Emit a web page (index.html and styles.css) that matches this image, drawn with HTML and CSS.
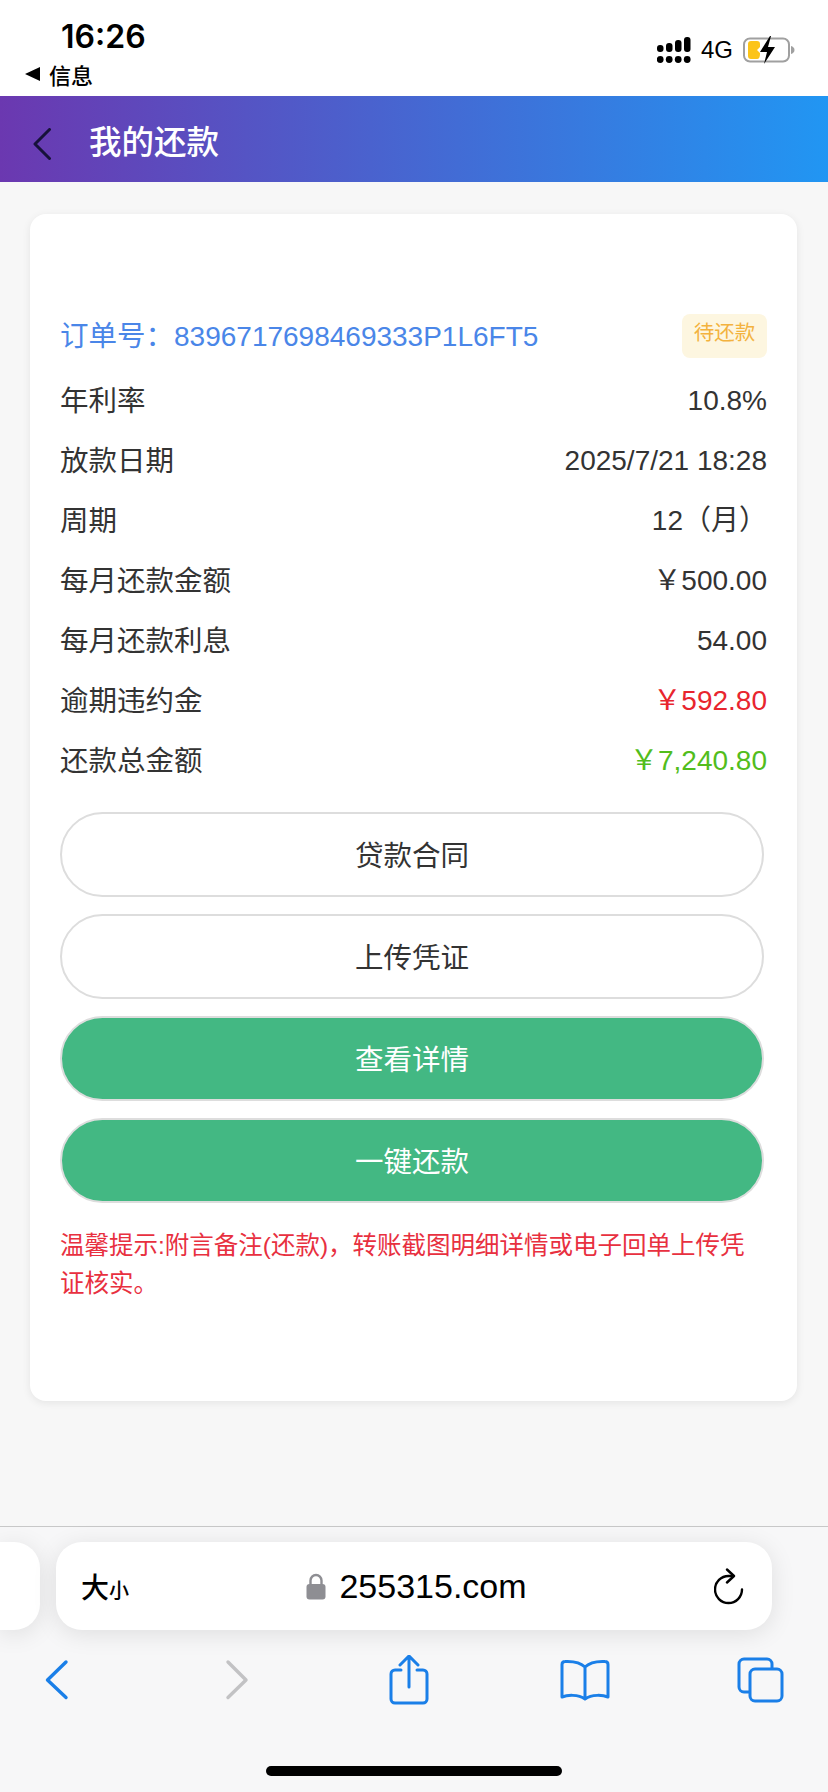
FILE: index.html
```html
<!DOCTYPE html>
<html lang="zh-CN">
<head>
    <meta charset="UTF-8">
    <meta name="viewport" content="width=device-width, initial-scale=1.0">
    <title>我的还款</title>
    <link rel="stylesheet" href="styles.css">
</head>
<body>
    <div class="status-bar">
        <div class="status-left">
            <div class="time">16:26</div>
            <div class="back-app"><span class="back-arrow"></span>信息</div>
        </div>
        <div class="status-right">
            <svg class="signal" width="34" height="26" viewBox="0 0 34 26">
                <rect x="0" y="8" width="6.500" height="7" rx="3"/>
                <rect x="9" y="6" width="6.500" height="9" rx="3"/>
                <rect x="18" y="3" width="6.500" height="12" rx="3"/>
                <rect x="27" y="0" width="6.500" height="15" rx="3"/>
                <circle cx="3.200" cy="22.500" r="3.400"/>
                <circle cx="12.200" cy="22.500" r="3.400"/>
                <circle cx="21.200" cy="22.500" r="3.400"/>
                <circle cx="30.200" cy="22.500" r="3.400"/>
            </svg>
            <span class="network">4G</span>
            <svg class="battery" width="52" height="28" viewBox="0 0 52 28">
                <rect x="1" y="2.500" width="45" height="23" rx="6" fill="none" stroke="#a0a0a0" stroke-width="2"/>
                <path d="M48 10c2 .5 3.500 2 3.500 4s-1.500 3.500-3.500 4z" fill="#a0a0a0"/>
                <path d="M8 5h6c2 0 3 1 3 3v3l-3 3 3 3v1c0 3-1 5-3 5H8c-2 0-3-1-3-3V8c0-2 1-3 3-3z" fill="#fcc419"/>
                <path d="M27 0 17 16h7l-3 12 11-17h-7l3-11z" fill="#000"/>
            </svg>
        </div>
    </div>

    <div class="page-header">
        <svg class="header-back" width="20" height="32" viewBox="0 0 20 32">
            <path d="M17.500 1.500 3 16l14.500 14.500" fill="none" stroke="#17123a" stroke-width="3" stroke-linecap="round" stroke-linejoin="round"/>
        </svg>
        <h1>我的还款</h1>
    </div>

    <div class="page-main">
        <div class="card">
            <div class="row order-row">
                <span class="order-no"><span class="label">订单号：</span>8396717698469333P1L6FT5</span>
                <span class="badge">待还款</span>
            </div>
            <div class="row"><span class="label">年利率</span><span>10.8%</span></div>
            <div class="row"><span class="label">放款日期</span><span>2025/7/21 18:28</span></div>
            <div class="row"><span class="label">周期</span><span>12（月）</span></div>
            <div class="row"><span class="label">每月还款金额</span><span>￥500.00</span></div>
            <div class="row"><span class="label">每月还款利息</span><span>54.00</span></div>
            <div class="row"><span class="label">逾期违约金</span><span class="red">￥592.80</span></div>
            <div class="row"><span class="label">还款总金额</span><span class="green">￥7,240.80</span></div>

            <div class="actions">
                <button class="btn">贷款合同</button>
                <button class="btn">上传凭证</button>
                <button class="btn btn-green">查看详情</button>
                <button class="btn btn-green">一键还款</button>
            </div>

            <p class="notice">温馨提示:附言备注(还款)，转账截图明细详情或电子回单上传凭证核实。</p>
        </div>
    </div>

    <div class="browser-bar">
        <div class="address-row">
            <div class="prev-tab"></div>
            <div class="address">
                <span class="text-size">大<small>小</small></span>
                <span class="url">
                    <svg width="20" height="27" viewBox="0 0 20 27">
                        <path d="M4.500 12V7.500a5.500 5.500 0 0 1 11 0V12" fill="none" stroke="#8e8e93" stroke-width="2.400"/>
                        <rect x="0.500" y="11" width="19" height="15.500" rx="3" fill="#8e8e93"/>
                    </svg>
                    255315.com
                </span>
                <svg class="reload" width="30" height="37" viewBox="0 0 30 37">
                    <path d="M28 21.500a13.500 13.500 0 1 1-13.500-13.500h3" fill="none" stroke="#000" stroke-width="2.400" stroke-linecap="round"/>
                    <path d="M13 1.500 20 8l-7 6.500" fill="none" stroke="#000" stroke-width="2.400" stroke-linecap="round" stroke-linejoin="round"/>
                </svg>
            </div>
        </div>
        <div class="toolbar">
            <svg width="50" height="50" viewBox="0 0 50 50">
                <path d="M34 7 15.500 25 34 42.500" fill="none" stroke="#1a7fe8" stroke-width="3.400" stroke-linecap="round" stroke-linejoin="round"/>
            </svg>
            <svg width="50" height="50" viewBox="0 0 50 50">
                <path d="M20 7 38 25 20 42.500" fill="none" stroke="#c2c2c4" stroke-width="3.400" stroke-linecap="round" stroke-linejoin="round"/>
            </svg>
            <svg width="50" height="50" viewBox="0 0 50 50">
                <path d="M17 16h-6a4 4 0 0 0-4 4v25a4 4 0 0 0 4 4h28a4 4 0 0 0 4-4V20a4 4 0 0 0-4-4h-6" fill="none" stroke="#1a7fe8" stroke-width="3" stroke-linecap="round" transform="translate(0 -1)"/>
                <path d="M25 32V2M16 10l9-9 9 9" fill="none" stroke="#1a7fe8" stroke-width="3" stroke-linecap="round" stroke-linejoin="round"/>
            </svg>
            <svg width="50" height="50" viewBox="0 0 50 50">
                <path d="M25 12c-4-4-10-6-20-5.500-2 0-3 1-3 3V42c5-2 16-3 23 2 7-5 18-4 23-2V9.500c0-2-1-3-3-3-10-.5-16 1.500-20 5.500zM25 12v32" fill="none" stroke="#1a7fe8" stroke-width="3" stroke-linejoin="round"/>
            </svg>
            <svg width="50" height="50" viewBox="0 0 50 50">
                <path d="M36 14v-5a5 5 0 0 0-5-5H8a5 5 0 0 0-5 5v23a5 5 0 0 0 5 5h5" fill="none" stroke="#1a7fe8" stroke-width="3"/>
                <rect x="14" y="14" width="32" height="32" rx="5" fill="none" stroke="#1a7fe8" stroke-width="3"/>
            </svg>
        </div>
        <div class="home-indicator"></div>
    </div>
</body>
</html>
```

FILE: styles.css
```css
* {
    box-sizing: border-box;
}
body {
    display: flex;
    flex-direction: column;
    height: 1792px;
    margin: 0;
    background-color: #f7f7f7;
    font-family: "Liberation Sans", "Noto Sans CJK SC", sans-serif;
    color: #333;
    overflow: hidden;
}

/* status bar */
.status-bar {
    display: flex;
    justify-content: space-between;
    height: 96px;
    background-color: #fff;
    color: #000;
}
.status-left {
    padding: 18px 0 0 25px;
}
.time {
    padding-left: 36px;
    height: 38px;
    line-height: 38px;
    font-family: Inter, sans-serif;
    font-size: 32px;
    font-weight: 600;
}
.back-app {
    display: flex;
    align-items: center;
    height: 30px;
    margin-top: 3px;
    font-size: 22px;
    font-weight: 500;
}
.back-arrow {
    width: 0;
    height: 0;
    margin-right: 9px;
    border-top: 7px solid transparent;
    border-bottom: 7px solid transparent;
    border-right: 15px solid #000;
}
.status-right {
    display: flex;
    align-items: center;
    height: 28px;
    margin: 36px 33px 0 0;
}
.network {
    margin: 0 10px 0 10px;
    font-size: 24px;
}

/* header */
.page-header {
    display: flex;
    align-items: center;
    height: 86px;
    padding-left: 32px;
    background: linear-gradient(90deg, #6b38b0, #2196f3);
}
.header-back {
    margin-top: 10px;
}
.page-header h1 {
    margin: 0 0 0 37px;
    color: #fff;
    font-size: 32.500px;
    font-weight: 500;
}

/* card */
.page-main {
    flex: 1;
    padding: 32px 31px 0 30px;
}
.card {
    padding: 92px 30px 98px;
    background-color: #fff;
    border-radius: 16px;
    box-shadow: 0 2px 8px rgba(0, 0, 0, 0.08);
}
.row {
    display: flex;
    justify-content: space-between;
    align-items: center;
    height: 60px;
    padding-top: 2px;
    font-size: 28px;
    line-height: 36px;
}
.label {
    font-size: 28.500px;
}
.order-row {
    margin-bottom: 4px;
    padding-top: 0;
}
.order-no {
    color: #4a86e8;
}
.badge {
    width: 85px;
    height: 44px;
    line-height: 38px;
    background-color: #fdf6e0;
    border-radius: 8px;
    color: #f3b23e;
    font-size: 20.500px;
    text-align: center;
}
.red {
    color: #e8252e;
}
.green {
    color: #52bd1c;
}
.actions {
    display: flex;
    flex-direction: column;
    gap: 17px;
    margin: 22px 3px 0 0;
}
.btn {
    height: 85px;
    padding: 0 0 2px;
    background-color: #fff;
    border: 2px solid #ddd;
    border-radius: 43px;
    color: #333;
    font-family: inherit;
    font-size: 28.500px;
}
.btn-green {
    background-color: #43b883;
    color: #fff;
}
.notice {
    margin: 24px 0 0;
    color: #e8303f;
    font-size: 24.500px;
    line-height: 38px;
}

/* safari bar */
.browser-bar {
    height: 266px;
    padding-top: 15px;
    border-top: 1px solid #c8c8c8;
    background-color: #f7f7f8;
}
.address-row {
    display: flex;
    gap: 16px;
    height: 88px;
}
.prev-tab {
    width: 40px;
    background-color: #fff;
    border-radius: 0 26px 26px 0;
    box-shadow: 0 4px 24px rgba(0, 0, 0, 0.1);
}
.address {
    display: flex;
    justify-content: space-between;
    align-items: center;
    width: 716px;
    padding: 0 28px 0 25px;
    background-color: #fff;
    border-radius: 26px;
    box-shadow: 0 4px 24px rgba(0, 0, 0, 0.1);
    color: #000;
}
.text-size {
    width: 38px;
    white-space: nowrap;
    font-size: 28px;
    font-weight: 500;
}
.text-size small {
    font-size: 20px;
}
.url {
    display: flex;
    align-items: center;
    gap: 13px;
    font-size: 34px;
}
.toolbar {
    display: flex;
    justify-content: space-between;
    padding: 0 42px 0 32px;
    margin-top: 25px;
}
.home-indicator {
    width: 296px;
    height: 10px;
    margin: 61px auto 0;
    background-color: #000;
    border-radius: 5px;
}
```
